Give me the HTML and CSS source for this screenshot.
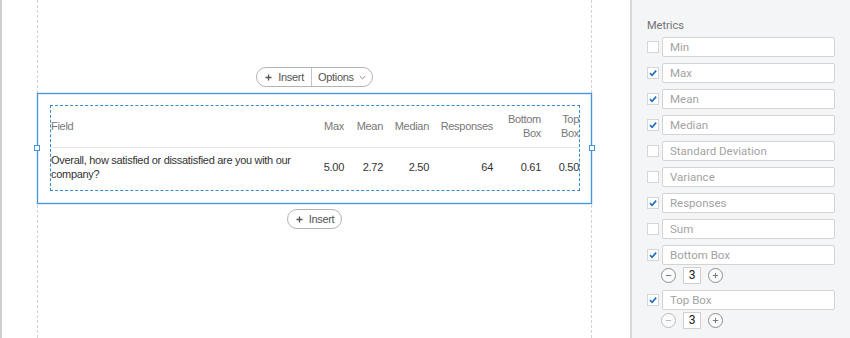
FILE: index.html
```html
<!DOCTYPE html>
<html>
<head>
<meta charset="utf-8">
<link rel="stylesheet" href="styles.css">
</head>
<body>
<div class="app">
  <main class="canvas">
    <div class="page">
      <div class="toolbar">
        <div class="pill">
          <span class="seg"><svg class="plus" width="7" height="7" viewBox="0 0 7 7"><path d="M3.5 0.5v6M0.5 3.5h6"/></svg>Insert</span>
          <span class="seg divider">Options<svg class="chev" width="7" height="5" viewBox="0 0 7 5"><path d="M0.8 1.2L3.5 3.8L6.2 1.2"/></svg></span>
        </div>
      </div>
      <div class="block">
        <span class="handle left"></span>
        <span class="handle right"></span>
        <div class="dashed">
          <table class="stats">
            <colgroup>
              <col class="c-field"><col class="c-max"><col class="c-mean"><col class="c-median"><col class="c-resp"><col class="c-bottom"><col class="c-top">
            </colgroup>
            <thead>
              <tr><th class="field">Field</th><th>Max</th><th>Mean</th><th>Median</th><th>Responses</th><th>Bottom Box</th><th>Top Box</th></tr>
            </thead>
            <tbody>
              <tr><td class="field">Overall, how satisfied or dissatisfied are you with our company?</td><td>5.00</td><td>2.72</td><td>2.50</td><td>64</td><td>0.61</td><td>0.50</td></tr>
            </tbody>
          </table>
        </div>
      </div>
      <div class="toolbar after">
        <div class="pill">
          <span class="seg"><svg class="plus" width="7" height="7" viewBox="0 0 7 7"><path d="M3.5 0.5v6M0.5 3.5h6"/></svg>Insert</span>
        </div>
      </div>
    </div>
  </main>
  <aside class="panel">
    <div class="label">Metrics</div>
    <div class="metric"><div class="row"><span class="cb"></span><div class="input">Min</div></div></div>
    <div class="metric"><div class="row"><span class="cb on"><svg viewBox="0 0 12 12"><path d="M2.3 6.2L4.9 8.7L9.8 3.2"/></svg></span><div class="input">Max</div></div></div>
    <div class="metric"><div class="row"><span class="cb on"><svg viewBox="0 0 12 12"><path d="M2.3 6.2L4.9 8.7L9.8 3.2"/></svg></span><div class="input">Mean</div></div></div>
    <div class="metric"><div class="row"><span class="cb on"><svg viewBox="0 0 12 12"><path d="M2.3 6.2L4.9 8.7L9.8 3.2"/></svg></span><div class="input">Median</div></div></div>
    <div class="metric"><div class="row"><span class="cb"></span><div class="input">Standard Deviation</div></div></div>
    <div class="metric"><div class="row"><span class="cb"></span><div class="input">Variance</div></div></div>
    <div class="metric"><div class="row"><span class="cb on"><svg viewBox="0 0 12 12"><path d="M2.3 6.2L4.9 8.7L9.8 3.2"/></svg></span><div class="input">Responses</div></div></div>
    <div class="metric"><div class="row"><span class="cb"></span><div class="input">Sum</div></div></div>
    <div class="metric">
      <div class="row"><span class="cb on"><svg viewBox="0 0 12 12"><path d="M2.3 6.2L4.9 8.7L9.8 3.2"/></svg></span><div class="input">Bottom Box</div></div>
      <div class="stepper">
        <span class="circ"><svg viewBox="0 0 15 15"><path d="M4.5 7.5h6"/></svg></span>
        <span class="val">3</span>
        <span class="circ"><svg viewBox="0 0 15 15"><path d="M4.5 7.5h6M7.5 4.5v6"/></svg></span>
      </div>
    </div>
    <div class="metric">
      <div class="row"><span class="cb on"><svg viewBox="0 0 12 12"><path d="M2.3 6.2L4.9 8.7L9.8 3.2"/></svg></span><div class="input">Top Box</div></div>
      <div class="stepper">
        <span class="circ dim"><svg viewBox="0 0 15 15"><path d="M4.5 7.5h6"/></svg></span>
        <span class="val">3</span>
        <span class="circ"><svg viewBox="0 0 15 15"><path d="M4.5 7.5h6M7.5 4.5v6"/></svg></span>
      </div>
    </div>
  </aside>
</div>
</body>
</html>
```
FILE: styles.css
```css
* { box-sizing: border-box; }
html, body { margin: 0; padding: 0; }
body {
  font-family: "Liberation Sans", Arial, sans-serif;
  font-size: 11px;
  color: #333;
  background: #fff;
  overflow: hidden;
}
.app {
  display: flex;
  height: 338px;
  width: 850px;
}
.canvas {
  width: 630px;
  flex: none;
  border-left: 2px solid #cfcfcf;
  background: #fff;
  letter-spacing: -0.3px;
}
.page {
  margin-left: 35px;
  width: 555px;
  height: 100%;
  border-left: 1px dashed #d2d2d2;
  border-right: 1px dashed #d2d2d2;
}
.toolbar {
  padding-top: 67px;
  display: flex;
  justify-content: center;
}
.toolbar.after { padding-top: 5px; }
.pill {
  display: flex;
  height: 20px;
  border: 1px solid #b3b3b3;
  border-radius: 10px;
  color: #555;
  background: #fff;
  line-height: 18px;
}
.seg {
  display: flex;
  align-items: center;
  padding: 0 7px 0 8px;
  gap: 6px;
}
.seg.divider { border-left: 1px solid #c4c4c4; padding: 0 6px 0 6px; gap: 5px; }
.plus path { stroke: #555; stroke-width: 1.3; fill: none; }
.chev path { stroke: #888; stroke-width: 1; fill: none; }
.block {
  position: relative;
  margin: 6px -1px 0;
  border: 1px solid #4a94df;
  box-shadow: inset 0 0 0 1px rgba(74, 148, 223, 0.18), 0 0 0 1px rgba(74, 148, 223, 0.18);
  padding: 11px 11px 12px 12px;
}
.handle {
  position: absolute;
  width: 6px;
  height: 6px;
  border: 1px solid #4a94df;
  background: #fff;
  top: calc(50% - 4px);
}
.handle.left { left: -4px; }
.handle.right { right: -4px; }
.dashed {
  border: 1px dashed #3a89cf;
}
.stats {
  width: 528px;
  table-layout: fixed;
  border-collapse: collapse;
}
.c-field { width: 249px; }
.c-max { width: 44px; }
.c-mean { width: 39px; }
.c-median { width: 46px; }
.c-resp { width: 64px; }
.c-bottom { width: 48px; }
.c-top { width: 38px; }
.stats th {
  font-weight: normal;
  color: #777;
  text-align: right;
  vertical-align: middle;
  line-height: 14px;
  padding: 0 0 0 6px;
  height: 41px;
  border-bottom: 1px solid #e6e6e6;
}
.stats td {
  text-align: right;
  vertical-align: middle;
  line-height: 14px;
  padding: 0 0 4px;
  height: 43px;
  color: #333;
}
.stats th.field, .stats td.field { text-align: left; padding-left: 0; }
.stats td.field { padding-right: 4px; }

.panel {
  flex: 1;
  background: #f4f5f7;
  border-left: 2px solid #d9d9d9;
  padding: 19px 15px 0 15px;
  font-family: Roboto, "Liberation Sans", sans-serif;
}
.label {
  color: #727272;
  line-height: 14px;
  margin-bottom: 4px;
}
.metric { margin-bottom: 6px; }
.row {
  display: flex;
  align-items: center;
  height: 20px;
}
.cb {
  width: 12px;
  height: 12px;
  border: 1px solid #d6d6d6;
  background: #fff;
  margin-right: 3px;
  display: flex;
}
.cb svg { width: 10px; height: 10px; }
.cb path { stroke: #1f6fbf; stroke-width: 2; fill: none; }
.input {
  width: 173px;
  height: 20px;
  border: 1px solid #d4d4d4;
  border-radius: 2px;
  background: #fff;
  padding-left: 7px;
  color: #a3a3a3;
  line-height: 18px;
  font-size: 11.5px;
}
.stepper {
  display: flex;
  align-items: center;
  margin-top: 2px;
  margin-left: 14px;
  height: 17px;
}
.circ {
  width: 15px;
  height: 15px;
  border: 1px solid #8f8f8f;
  border-radius: 50%;
  background: #fbfbfb;
  display: flex;
}
.circ svg { width: 13px; height: 13px; }
.circ path { stroke: #666; stroke-width: 1; fill: none; }
.circ.dim { border-color: #bdbdbd; }
.circ.dim path { stroke: #b0b0b0; }
.val {
  width: 18px;
  height: 17px;
  margin: 0 7px;
  border: 1px solid #d0d0d0;
  background: #fff;
  color: #222;
  text-align: center;
  line-height: 15px;
  font-size: 12px;
}
```
